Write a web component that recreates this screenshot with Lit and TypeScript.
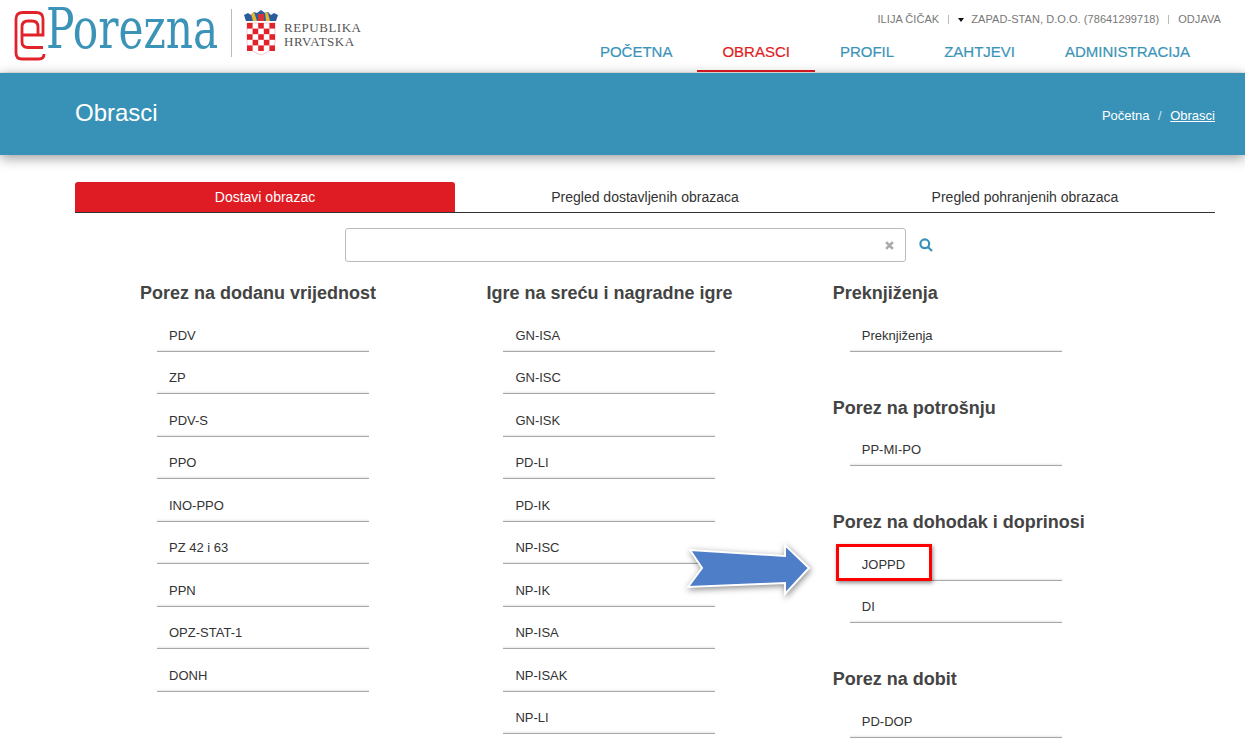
import { LitElement, html, css, svg } from "lit";
import { customElement } from "lit/decorators.js";

const groups1 = [{ t: "Porez na dodanu vrijednost", i: ["PDV", "ZP", "PDV-S", "PPO", "INO-PPO", "PZ 42 i 63", "PPN", "OPZ-STAT-1", "DONH"] }];
const groups2 = [{ t: "Igre na sreću i nagradne igre", i: ["GN-ISA", "GN-ISC", "GN-ISK", "PD-LI", "PD-IK", "NP-ISC", "NP-IK", "NP-ISA", "NP-ISAK", "NP-LI"] }];
const groups3 = [
  { t: "Preknjiženja", i: ["Preknjiženja"] },
  { t: "Porez na potrošnju", i: ["PP-MI-PO"] },
  { t: "Porez na dohodak i doprinosi", i: ["JOPPD", "DI"] },
  { t: "Porez na dobit", i: ["PD-DOP"] },
];

function checks() {
  const out = [];
  for (let r = 0; r < 5; r++)
    for (let c = 0; c < 5; c++)
      if ((r + c) % 2 === 0) out.push(svg`<rect x=${1 + c * 5.6} y=${13 + r * 5.6} width="5.6" height="5.6" fill="#e2222a"/>`);
  return out;
}

@customElement("app-root")
export class AppRoot extends LitElement {
  static styles = css`
    :host { display: block; position: relative; height: 756px; overflow: hidden; background: #fff; font-family: "Liberation Sans", Arial, sans-serif; color: #333; }
    .header { height: 72px; display: flex; justify-content: space-between; border-bottom: 1px solid #eee; }
    .brand { display: flex; align-items: flex-start; padding: 9px 0 0 15px; }
    .logo { width: 204px; height: 56px; margin-top: -5px; flex: none; display: block; overflow: visible; }
    .logo text { font-family: "DejaVu Serif", serif; font-size: 56px; fill: #3b94b8; }
    .divider { width: 1px; height: 48px; background: #bbb; flex: none; margin-left: 12px; }
    .arms { width: 36px; height: 46px; margin: 1px 0 0 11px; flex: none; overflow: visible; }
    .rh { margin: 12px 0 0 5px; font: 13px/14px "Liberation Serif", serif; color: #555; letter-spacing: .5px; }
    .right { display: flex; flex-direction: column; align-items: flex-end; padding-right: 23px; }
    .user { display: flex; align-items: center; height: 13px; margin-top: 13px; font-size: 11px; line-height: 13px; color: #777; letter-spacing: .06px; padding-right: 1px; }
    .sep { width: 1px; height: 9px; background: #bbb; margin: 0 9px; }
    .tri { width: 0; height: 0; border: 3.5px solid transparent; border-top: 4px solid #111; border-bottom: 0; margin-right: 7px; }
    .nav { display: flex; margin-top: 10px; margin-right: 7px; }
    .nav a { height: 36px; line-height: 31px; padding: 0 25px; font-size: 15px; color: #3b94b8; box-sizing: border-box; -webkit-text-stroke: .2px currentColor; }
    .nav a.on { color: #df1c24; border-bottom: 2px solid #df1c24; }
    .band { height: 82px; background: #3892b7; box-shadow: 0 3px 12px rgba(0,0,0,.4); display: flex; justify-content: space-between; padding: 0 30px 0 75px; position: relative; }
    .band h1 { margin: 0; font-size: 24px; font-weight: 400; line-height: 80px; color: #fff; }
    .crumb { font-size: 13px; line-height: 86px; color: #fff; }
    .crumb i { font-style: normal; margin: 0 8.5px; color: #cfe3ec; }
    .crumb u { text-underline-offset: 1px; }
    .main { padding: 27px 30px 0 75px; }
    .tabs { display: grid; grid-template-columns: repeat(3, 380px); border-bottom: 1px solid #333; height: 30px; }
    .tab { text-align: center; font-size: 14px; line-height: 30px; color: #333; }
    .tab.on { background: #df1c24; color: #fff; border-radius: 3px 3px 0 0; }
    .search { display: flex; align-items: center; margin: 15px 0 0 270px; }
    .input { width: 561px; height: 34px; box-sizing: border-box; border: 1px solid #bbb; border-radius: 3px; display: flex; align-items: center; justify-content: flex-end; padding-right: 11px; }
    .input svg { display: block; }
    .mag { margin-left: 13px; display: block; }
    .cols { display: grid; grid-template-columns: repeat(3, 346.4px); margin: 19px 0 0 65px; }
    h3 { margin: 0; font-size: 18px; line-height: 24px; font-weight: 700; color: #444; }
    .group { margin-bottom: 44px; }
    .group ul { list-style: none; margin: 0; padding: 4px 0 0 17px; }
    .group li { width: 212px; height: 42.5px; box-sizing: border-box; border-bottom: 1px solid #a8a8a8; padding: 17.6px 12px 0; font-size: 13px; line-height: 18px; color: #333; box-shadow: inset 0 -3px 2px -2px #e8e8e8; }
    .arrow { position: absolute; left: 680px; top: 535px; width: 140px; height: 70px; overflow: visible; filter: drop-shadow(1px 2px 3px rgba(0,0,0,.45)); }
    .box { position: absolute; left: 836px; top: 544px; width: 96px; height: 37px; box-sizing: border-box; border: 3px solid #f00; box-shadow: 1px 2px 4px rgba(0,0,0,.45); }
  `;

  private col(gs: { t: string; i: string[] }[]) {
    return html`<div>${gs.map(g => html`<div class="group"><h3>${g.t}</h3><ul>${g.i.map(x => html`<li>${x}</li>`)}</ul></div>`)}</div>`;
  }

  render() {
    return html`
      <div class="header">
        <div class="brand">
          <svg class="logo" viewBox="15 4 204 56">
            <g fill="none" stroke="#e2222a" stroke-width="2.8">
              <path d="M44 54Q44 59 39 59H22Q16 59 16 53V19Q16 12.5 23 12.5H36Q43 12.5 43 19V35H22"/>
              <path d="M22 35V27Q22 21 28 21H32Q38 21 38 27V35M22 35V42Q22 47.5 28 47.5H43"/>
            </g>
            <text transform="translate(46 48) scale(.756 1)">Porezna</text>
          </svg>
          <div class="divider"></div>
          <svg class="arms" viewBox="-3 0 36 46">
            <path d="M-2 5l4-2 3 2 3-3 3 1 4-3 4 3 3-1 3 3 3-2 4 2-2 6H0z" fill="#2b5c9e"/>
            <path d="M5 4l3-2 3 9H7zM19 2l3 1 2 8h-4z" fill="#e8b830"/>
            <path d="M12 4h6v7h-6z" fill="#d9343a"/>
            <path d="M1 13h28v19c0 7-7 10-14 13C8 42 1 39 1 32z" fill="#fff" stroke="#e9a5a8" stroke-width=".6"/>
            ${checks()}
          </svg>
          <div class="rh">REPUBLIKA<br />HRVATSKA</div>
        </div>
        <div class="right">
          <div class="user">ILIJA ČIČAK<span class="sep"></span><span class="tri"></span>ZAPAD-STAN, D.O.O. (78641299718)<span class="sep"></span>ODJAVA</div>
          <div class="nav">
            <a>POČETNA</a><a class="on">OBRASCI</a><a>PROFIL</a><a>ZAHTJEVI</a><a>ADMINISTRACIJA</a>
          </div>
        </div>
      </div>
      <div class="band">
        <h1>Obrasci</h1>
        <div class="crumb">Početna<i>/</i><u>Obrasci</u></div>
      </div>
      <div class="main">
        <div class="tabs">
          <div class="tab on">Dostavi obrazac</div>
          <div class="tab">Pregled dostavljenih obrazaca</div>
          <div class="tab">Pregled pohranjenih obrazaca</div>
        </div>
        <div class="search">
          <div class="input">
            <svg width="9" height="9" viewBox="0 0 8 8"><path d="M1 1l6 6M7 1L1 7" stroke="#aaa" stroke-width="2.4"/></svg>
          </div>
          <svg class="mag" width="14" height="14" viewBox="0 0 14 14" fill="none" stroke="#3892b7" stroke-width="2.2"><circle cx="5.8" cy="5.8" r="4.4"/><path d="M9 9l4 4"/></svg>
        </div>
        <div class="cols">
          ${this.col(groups1)}${this.col(groups2)}${this.col(groups3)}
        </div>
      </div>
      <svg class="arrow" viewBox="0 0 140 70">
        <path d="M10 15L105 21V10L129 33L105 59V48L8 52L22 33Z" fill="#4f7ec9" stroke="#fff" stroke-width="2"/>
      </svg>
      <div class="box"></div>
    `;
  }
}
